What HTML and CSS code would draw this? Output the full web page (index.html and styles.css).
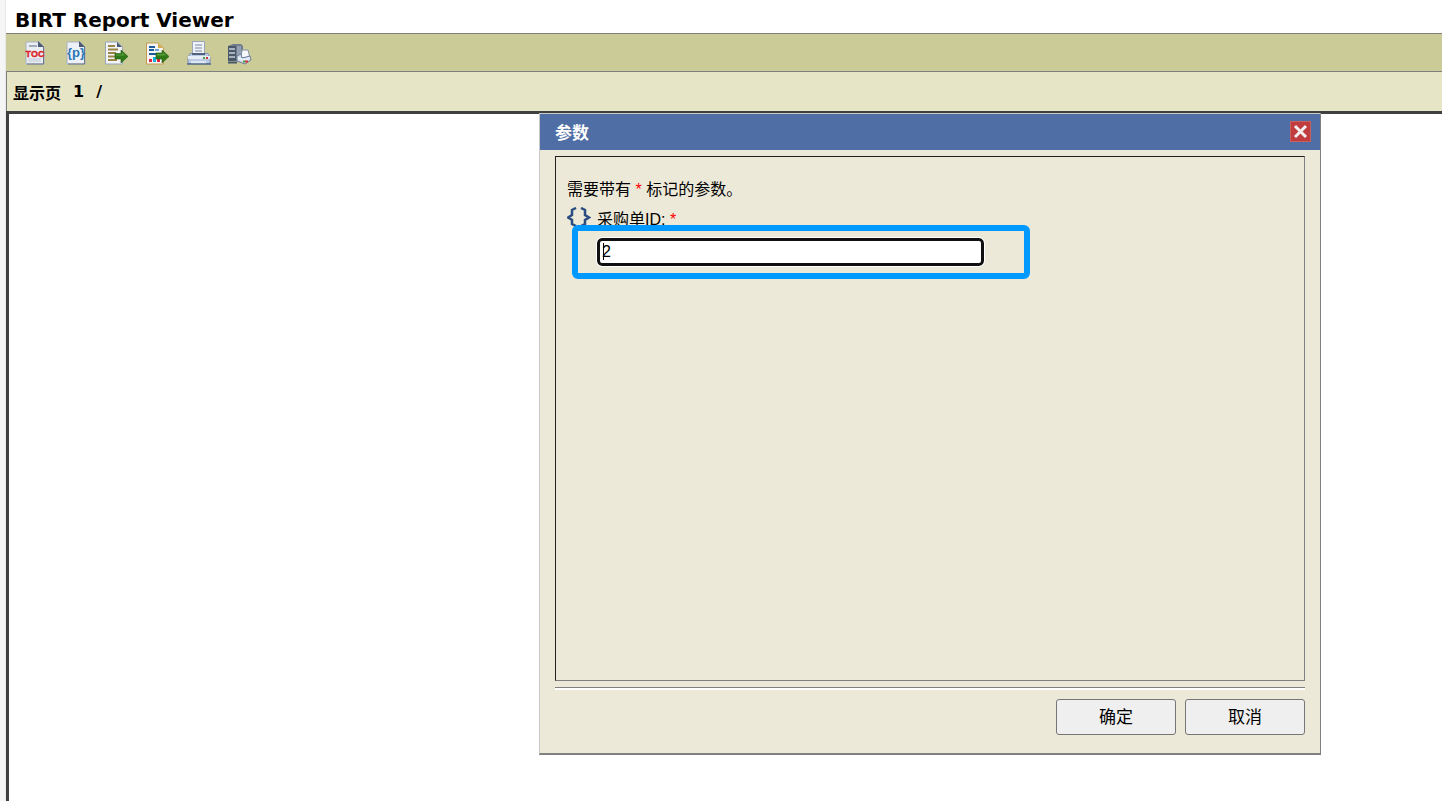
FILE: index.html
```
<!DOCTYPE html>
<html lang="zh-CN">
<head>
  <meta charset="UTF-8">
  <meta name="viewport" content="width=device-width, initial-scale=1.0">
  <title>BIRT Report Viewer</title>
  <link rel="stylesheet" href="styles.css">
</head>
<body>
  <div class="viewer">
    <h1 class="title">BIRT Report Viewer</h1>

    <div class="toolbar">
      <button type="button" class="tool" title="目录">
        <svg viewBox="0 0 24 24">
          <path d="M3 1h13l5 5v17H3z" fill="#e9edf4" stroke="#a9b1c2"/>
          <path d="M20.500 6v17H4" fill="none" stroke="#6b7488"/>
          <path d="M15 0v6h6z" fill="#4a5a74"/>
          <path d="M6 5h8" stroke="#a3abb9" stroke-width="2"/>
          <path d="M5 18h13M5 20h13" stroke="#c3cad8"/>
          <text x="12" y="16" class="toc" text-anchor="middle">TOC</text>
        </svg>
      </button>
      <button type="button" class="tool" title="参数">
        <svg viewBox="0 0 24 24">
          <path d="M3 1h13l5 5v17H3z" fill="#edf1f7" stroke="#a9b1c2"/>
          <path d="M20.500 6v17H4" fill="none" stroke="#6b7488"/>
          <path d="M15 0v6h6z" fill="#4a5a74"/>
          <text x="12" y="16" class="param" text-anchor="middle">{p}</text>
        </svg>
      </button>
      <button type="button" class="tool" title="导出数据">
        <svg viewBox="1 0 24 24">
          <path d="M1.500 1h12l5 5v17h-17z" fill="#f2f4f8" stroke="#99a4b6"/>
          <path d="M13 1v5h5z" fill="#4a5a74"/>
          <path d="M4 5h7M4 8.500h10M4 12h8M4 15.500h7M4 19h9" stroke="#9a8747" stroke-width="2"/>
          <path d="M11 12.500h6V9l7 6.500-7 6.500v-4h-6z" fill="#2f7a16" stroke="#235d12" stroke-width=".6"/>
          <path d="M12 13.500h6v-2l3 3h-9z" fill="#5a9c3c"/>
        </svg>
      </button>
      <button type="button" class="tool" title="导出报表">
        <svg viewBox="1 0 24 24">
          <path d="M1.500 2h12l5 5v16h-17z" fill="#f4f5f5" stroke="#c49a51"/>
          <path d="M13 2v5h5z" fill="#d7a84f"/>
          <path d="M4 6h6M4 9h5M4 13h7" stroke="#1f5c9a" stroke-width="2"/>
          <path d="M10 9h4" stroke="#6fa4d4" stroke-width="2"/>
          <path d="M4 18h3v3H4z" fill="#e2243b"/>
          <path d="M8 16h3v5H8z" fill="#12aee0"/>
          <path d="M12 18h3v3h-3z" fill="#e2243b"/>
          <path d="M11 12h6V9l7 6.500-7 6.500v-4h-6z" fill="#2f7a16" stroke="#235d12" stroke-width=".6"/>
          <path d="M12 13h6v-1.500l3 3h-9z" fill="#5a9c3c"/>
        </svg>
      </button>
      <button type="button" class="tool" title="打印">
        <svg viewBox="0 0 24 24">
          <path d="M5.500.500h12V15h-12z" fill="#eff2f8" stroke="#9aa6ba"/>
          <path d="M8 4h7M8 7h7M8 10h7" stroke="#a2adbd" stroke-width="1.500"/>
          <path d="M3 12.500h18l2 4v6H1v-6z" fill="#bccbe3" stroke="#7f92b2"/>
          <path d="M5 12h13v2H5z" fill="#51617c"/>
          <path d="M1 15h22v3H1z" fill="#e6edf8"/>
          <path d="M4 20h15v3H4z" fill="#dde6f3"/>
          <path d="M0 23h24" stroke="#526889" stroke-width="1.500"/>
          <path d="M16 16h2v2h-2z" fill="#42a23b"/>
          <path d="M19 16h2v2h-2z" fill="#d2323c"/>
        </svg>
      </button>
      <button type="button" class="tool" title="服务器打印">
        <svg viewBox="1 0 24 24">
          <path d="M1 5l5-2h8l2 2v15H1z" fill="#717d8e"/>
          <path d="M1 5h8v15H1z" fill="#4b5868"/>
          <path d="M2 8h6M2 12h6M2 16h6" stroke="#c6d0dc" stroke-width="1.500"/>
          <path d="M10 5h4v13h-4z" fill="#92a0b2"/>
          <path d="M1 21.500h9" stroke="#455569" stroke-width="2"/>
          <path d="M15 9h6l2 8h-9z" fill="#f5f7fb" stroke="#8693a8"/>
          <path d="M10 15l4-2 1 4 8-2 1 4-6 4-8-3z" fill="#d3dcea" stroke="#6c7d98"/>
          <path d="M11 17l6 2 6-2" fill="none" stroke="#eef3fb" stroke-width="1.500"/>
          <path d="M16 19.500h2v2h-2z" fill="#42a23b"/>
          <path d="M18 19.500h3v2h-3z" fill="#d2323c"/>
        </svg>
      </button>
    </div>

    <div class="navbar">
      <span>显示页</span>
      <span>1</span>
      <span>/</span>
    </div>

    <div class="report"></div>
  </div>

  <form class="dialog" role="dialog" aria-labelledby="dialog-title">
    <div class="dialog-bar">
      <h2 id="dialog-title">参数</h2>
      <button type="button" class="close" aria-label="关闭">
        <svg viewBox="0 0 19 19">
          <path d="M4 4l11 11M15 4L4 15" stroke="#f4eeee" stroke-width="3"/>
        </svg>
      </button>
    </div>
    <div class="dialog-body">
      <div class="params">
        <p class="hint">需要带有 <span class="required">*</span> 标记的参数。</p>
        <div class="param-name">
          <svg viewBox="0 0 24 20">
            <path d="M9 1L5 3v5l-4 2.500L5 13v4l4 2M14 1l4 2v5l4 2.500-4 2.500v4l-4 2" fill="none" stroke="#2b4d82" stroke-width="2.500"/>
          </svg>
          <label for="order-id">采购单ID: <span class="required">*</span></label>
        </div>
        <div class="highlight">
          <div class="field">
            <input type="text" id="order-id" value="2">
          </div>
        </div>
      </div>
      <hr>
      <div class="actions">
        <button type="button">确定</button>
        <button type="button">取消</button>
      </div>
    </div>
  </form>
</body>
</html>
```
FILE: styles.css
```
* {
  box-sizing: border-box;
}
body {
  margin: 0;
  min-height: 100vh;
  display: flex;
  position: relative;
  background: #f5f5f5;
  font-family: "Liberation Sans", "Noto Sans CJK SC", sans-serif;
  font-size: 16px;
  color: #000;
}
button {
  font: inherit;
  cursor: pointer;
}
svg {
  display: block;
}

/* report viewer */
.viewer {
  flex: 1;
  margin-left: 6px;
  display: flex;
  flex-direction: column;
  background: #fff;
  box-shadow: -1px 0 #e8e8e8;
}
.title {
  margin: 0;
  padding: 8px 9px 0;
  height: 33px;
  font: bold 20px/25px "DejaVu Sans", Verdana, sans-serif;
}
.toolbar {
  display: flex;
  align-items: center;
  gap: 17px;
  height: 38px;
  padding: 0 17px;
  background: #cbcb97;
  border-top: 1px solid #808080;
}
.tool {
  width: 24px;
  height: 24px;
  padding: 0;
  border: none;
  background: none;
}
.toc {
  font: bold 9px "Liberation Sans", sans-serif;
  fill: #dc1f26;
  stroke: #dc1f26;
  stroke-width: 0.4px;
}
.param {
  font: bold 13px "Liberation Sans", sans-serif;
  fill: #2a75b5;
}
.navbar {
  display: flex;
  align-items: center;
  gap: 12px;
  height: 40px;
  padding: 0 6px;
  background: #e6e6c6;
  border-top: 1px solid #808080;
  border-left: 1px solid #808080;
  font-family: "DejaVu Sans", "Noto Sans CJK SC", sans-serif;
  font-weight: bold;
}
.report {
  flex: 1;
  border-top: 3px solid #404040;
  border-left: 3px solid #404040;
}

/* parameter dialog */
.dialog {
  position: absolute;
  top: 113px;
  right: 121px;
  width: 782px;
  background: #ece9d8;
  border: 1px solid #c8c8c8;
  border-right-color: #808080;
  border-bottom: 2px solid #808080;
}
.dialog-bar {
  display: flex;
  align-items: center;
  justify-content: space-between;
  height: 36px;
  padding: 0 9px 2px 15px;
  background: #4e6ea5;
  color: #fff;
}
.dialog-bar h2 {
  margin: 0;
  font-size: 17px;
}
.close {
  width: 21px;
  height: 21px;
  padding: 0;
  border: 1px solid #c7615f;
  background: #c03c3e;
}
.dialog-body {
  padding: 6px 15px 18px;
}
.params {
  height: 525px;
  padding: 21px 11px;
  border: 1px solid #808080;
  border-top-color: #202020;
  border-left-color: #202020;
}
.hint {
  margin: 0 0 5px;
  line-height: 24px;
}
.required {
  color: #f00;
}
.param-name {
  display: flex;
  gap: 6px;
  height: 18px;
  line-height: 26px;
}
.param-name svg {
  width: 24px;
  height: 20px;
}
.highlight {
  position: relative;
  width: 458px;
  height: 54px;
  margin-left: 5px;
  padding: 7px 19px;
  border: 6px solid #0099ff;
  border-radius: 6px;
}
.field {
  position: relative;
  width: 387px;
}
/* text cursor */
.field::before {
  content: "";
  position: absolute;
  top: 5px;
  left: 6px;
  width: 1px;
  height: 17px;
  background: #000;
}
.field input {
  display: block;
  width: 100%;
  height: 28px;
  padding: 0 2px;
  border: 3px solid #101010;
  border-radius: 5px;
  outline: 1px solid #fff;
  background: #fff;
  font: inherit;
}
hr {
  height: 3px;
  margin: 6px 0 9px;
  border: none;
  border-top: 1px solid #808080;
  background: #fff;
}
.actions {
  display: flex;
  justify-content: flex-end;
  gap: 9px;
}
.actions button {
  width: 120px;
  height: 36px;
  padding: 0 0 3px;
  border: 1px solid #767676;
  border-radius: 3px;
  background: #efefef;
  font-size: 17px;
}
```
